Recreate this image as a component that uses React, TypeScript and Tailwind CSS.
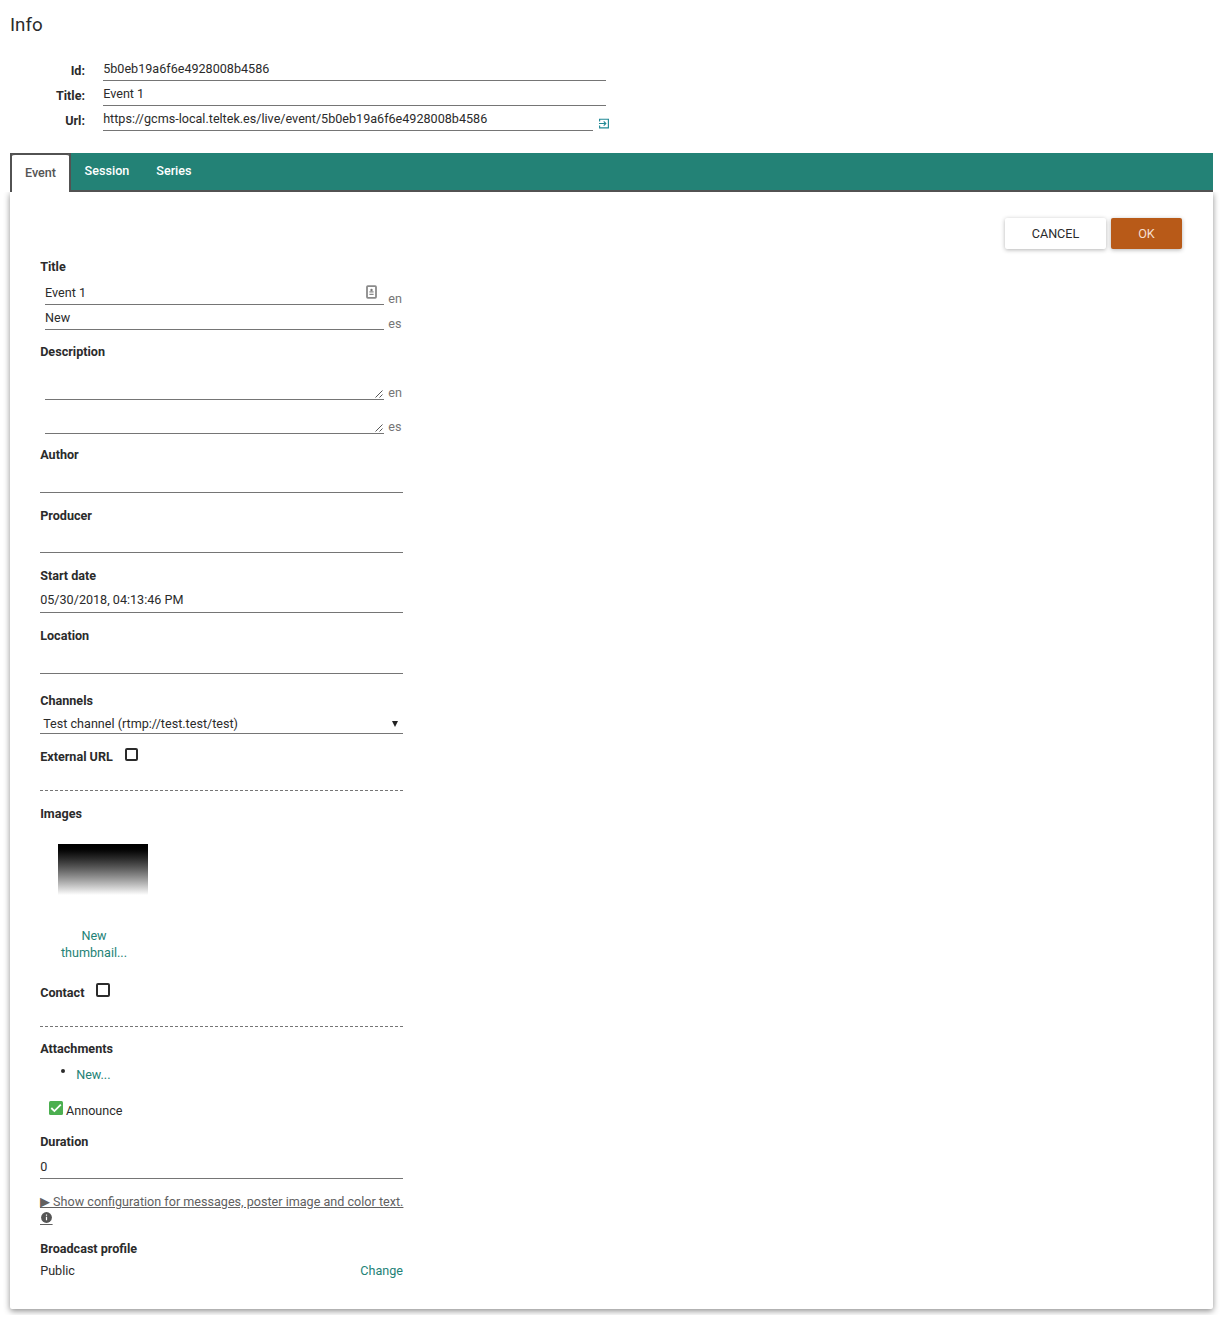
import type { ReactNode } from "react";

function InfoRow({ label, value, action }: { label: string; value: string; action?: ReactNode }) {
  return (
    <div className="flex h-[25px]">
      <div className="w-[75px] pt-[5px] text-right leading-5 font-bold">{label}</div>
      <div className={"ml-[18px] h-[25px] border-b border-[#757575] pt-[3px] pl-[0.2px] leading-5 " + (action ? "w-[490px]" : "w-[503px]")}>
        {value}
      </div>
      {action}
    </div>
  );
}

function Label({ children, className = "" }: { children: ReactNode; className?: string }) {
  return <div className={"h-5 pl-[0.2px] leading-[22px] font-bold " + className}>{children}</div>;
}

function Line({ children, className = "h-[17px]" }: { children?: ReactNode; className?: string }) {
  return <div className={"w-[363px] border-b border-[#757575] leading-5 " + className}>{children}</div>;
}

function LangRow({ lang, children, className = "", langClass = "top-[3px]" }: { lang: string; children?: ReactNode; className?: string; langClass?: string }) {
  return (
    <div className={"ml-[5px] flex items-end " + className}>
      <div className="flex h-[22px] w-[339px] justify-between border-b border-[#757575] leading-5">{children}</div>
      <span className={"relative ml-[4.3px] h-5 leading-5 text-[#757575] " + langClass}>{lang}</span>
    </div>
  );
}

function ResizeGrip() {
  return (
    <svg className="mt-[12px] mr-px ml-auto" width="8" height="8" viewBox="0 0 8 8" stroke="#444" strokeWidth="0.9">
      <path d="M.5 7.5l7-7M4.5 7.5l3-3" />
    </svg>
  );
}

function ContactCardIcon() {
  return (
    <svg className="mt-[2px] mr-[7px]" width="11" height="14" viewBox="0 0 11 14" fill="none">
      <rect x="1" y="1.2" width="9" height="11.6" rx=".8" stroke="#8a8a8a" strokeWidth="1.8" />
      <circle cx="5.5" cy="5" r="1.2" fill="#777" />
      <path d="M3.4 6.8h4.2M3.4 9.3h4.2" stroke="#888" strokeWidth="1.3" />
    </svg>
  );
}

export default function App() {
  return (
    <div className="h-[1326px] overflow-hidden bg-white px-[10px] font-[Roboto,sans-serif] text-[12.6px] text-[#2b2b2b]">
      <h1 className="h-[56px] pt-[13px] text-[18.75px] leading-6">Info</h1>

      <InfoRow label="Id:" value="5b0eb19a6f6e4928008b4586" />
      <InfoRow label="Title:" value="Event 1" />
      <InfoRow
        label="Url:"
        value="https://gcms-local.teltek.es/live/event/5b0eb19a6f6e4928008b4586"
        action={
          <svg className="mt-[12px] ml-[6px]" width="10" height="11" viewBox="0 0 10 11" fill="none" stroke="#238a96">
            <path d="M.6 3.6V1.2h8.8v8.6H.6V7.4M0 5.5h6.5M4.7 3.4l2.1 2.1-2.1 2.1" strokeWidth="1.15" />
          </svg>
        }
      />

      <div className="mt-[22px] w-[1203px]">
        <nav className="flex h-[39px] bg-[#238276] font-medium text-white">
          <div className="h-[39px] w-[61px] bg-[#525252]">
            <div className="ml-[2px] h-[39px] w-[57px] rounded-t-[3px] border-t-2 border-[#525252] bg-white pt-[8px] text-center leading-5 text-[#555]">
              Event
            </div>
          </div>
          <div className="flex grow border-b-2 border-[#525252]">
            <span className="ml-[13.6px] pt-[8px] leading-5">Session</span>
            <span className="ml-[27px] pt-[8px] leading-5">Series</span>
          </div>
        </nav>

        <main className="h-[1117px] rounded-b-[2px] bg-white px-[30px] pt-[26px] shadow-[0_2px_6px_rgba(0,0,0,0.45)] [clip-path:inset(0_-10px_-6px_-10px)]">
          <div className="flex h-[31px] justify-end gap-[5px] pr-px">
            <button className="w-[101px] rounded-[2px] bg-white leading-[31px] shadow-[0_1px_4px_rgba(0,0,0,0.3)]">CANCEL</button>
            <button className="w-[71px] rounded-[2px] bg-[#b85a18] leading-[31px] text-[#f5dfcf] shadow-[0_1px_4px_rgba(0,0,0,0.3)]">OK</button>
          </div>

          <form className="w-[363px]">
            <Label className="mt-[7px]">Title</Label>
            <LangRow lang="en" langClass="top-[4px]" className="mt-[7px] h-[22px]">
              Event 1
              <ContactCardIcon />
            </LangRow>
            <LangRow lang="es" langClass="top-[4px]" className="mt-[3px] h-[22px]">New</LangRow>

            <Label className="mt-[11px]">Description</Label>
            <LangRow lang="en" className="h-[39px]"><ResizeGrip /></LangRow>
            <LangRow lang="es" className="h-[34px]"><ResizeGrip /></LangRow>

            <Label className="mt-[10px]">Author</Label>
            <Line className="h-[29px]" />
            <Label className="mt-[12px]">Producer</Label>
            <Line className="h-[28px]" />
            <Label className="mt-[12px]">Start date</Label>
            <Line className="h-[28px] pt-[5px] pl-[0.2px]">05/30/2018, 04:13:46 PM</Line>
            <Label className="mt-[12px]">Location</Label>
            <Line className="h-[29px]" />

            <Label className="mt-[16px]">Channels</Label>
            <Line className="flex h-[24px] justify-between pt-[4px] pr-[5px] pl-[3.2px]">
              <span>Test channel (rtmp://test.test/test)</span>
              <svg className="mt-[7px]" width="6" height="6" viewBox="0 0 6 6" fill="#222">
                <path d="M0 0h6L3 6z" />
              </svg>
            </Line>

            <div className="mt-[12px] flex h-5">
              <Label className="w-[73px]">External URL</Label>
              <span className="mt-[2px] ml-[12px] size-[13px] rounded-[2px] border-2 border-[#2b2b2b]" />
            </div>
            <div className="mt-[24px] h-px bg-[repeating-linear-gradient(90deg,#757575_0_3px,transparent_3px_5px)]" />

            <Label className="mt-[12px]">Images</Label>
            <div className="mt-[21px] ml-[18px] h-[51px] w-[90px] bg-linear-to-b from-black to-white" />
            <div className="mt-[32px] ml-[9px] w-[90px] text-center leading-[17px] text-[#238276]">
              New
              <br />
              thumbnail...
            </div>

            <div className="mt-[21px] flex h-5">
              <Label className="w-[44px]">Contact</Label>
              <span className="mt-px ml-[12px] size-[14px] rounded-[2px] border-2 border-[#2b2b2b]" />
            </div>
            <div className="mt-[24px] h-px bg-[repeating-linear-gradient(90deg,#757575_0_3px,transparent_3px_5px)]" />

            <Label className="mt-[11px]">Attachments</Label>
            <div className="mt-[6px] flex h-5 pl-[21px] leading-[22px]">
              <span className="mt-[5px] size-[4px] rounded-full bg-[#2b2b2b]" />
              <span className="ml-[11.2px] text-[#238276]">New...</span>
            </div>
            <div className="mt-[16px] flex h-5 pl-[9px] leading-[22px]">
              <svg className="mt-px" width="14" height="14" viewBox="0 0 14 14">
                <rect width="14" height="14" rx="1.5" fill="#4caf50" />
                <path d="M2.3 7l3.1 3.1L11.8 3.7" fill="none" stroke="#fff" strokeWidth="1.8" />
              </svg>
              <span className="ml-[3px]">Announce</span>
            </div>

            <Label className="mt-[11px]">Duration</Label>
            <Line className="h-[28px] pt-[6px] pl-[0.2px]">0</Line>

            <div className="mt-[14px] h-[35px] leading-[17px] whitespace-nowrap text-[#616161] underline">
              ▶ Show configuration for messages, poster image and color text.
              <svg className="mt-[1px] block" width="13" height="14" viewBox="0 0 13 14">
                <circle cx="6.5" cy="6.5" r="5.4" fill="#555" />
                <path d="M6.5 3.4v1.4M6.5 5.8v3.5" stroke="#fff" strokeWidth="1.2" />
                <path d="M0 13.5h12.6" stroke="#616161" />
              </svg>
            </div>

            <Label className="mt-[10px]">Broadcast profile</Label>
            <div className="mt-[2px] flex h-5 justify-between pl-[0.2px] leading-[22px]">
              <span>Public</span>
              <span className="text-[#238276]">Change</span>
            </div>
          </form>
        </main>
      </div>
    </div>
  );
}
